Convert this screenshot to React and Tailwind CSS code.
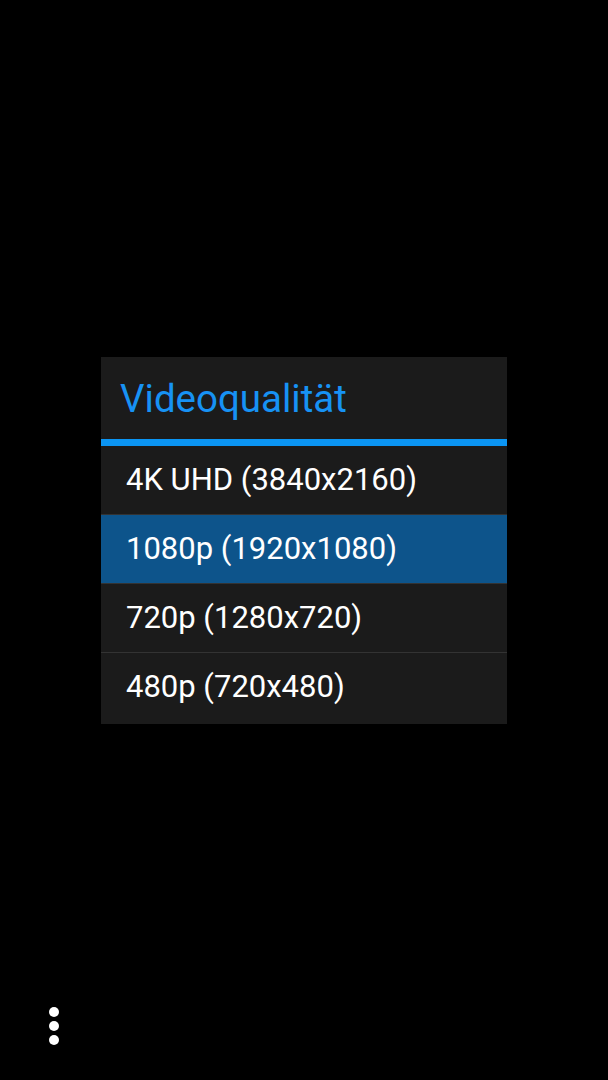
import React, { useState } from "react";

const options = [
  "4K UHD (3840x2160)",
  "1080p (1920x1080)",
  "720p (1280x720)",
  "480p (720x480)",
];

const App = () => {
  const [selected, setSelected] = useState(1);

  return (
    <div
      className="relative h-[1080px] w-full bg-black flex items-center justify-center"
      style={{ fontFamily: "Roboto, 'Noto Sans', sans-serif" }}
    >
      {/* Dialog */}
      <div className="w-[406px] bg-[#1b1b1b] flex flex-col">
        <div className="h-[82px] flex items-center pl-[19px] pt-[4px]">
          <h2 className="text-[38.5px] leading-none text-[#1792f4]">Videoqualität</h2>
        </div>
        <div className="h-[7px] bg-[#0b95f3]" />
        {options.map((opt, i) => (
          <button
            key={opt}
            onClick={() => setSelected(i)}
            className={
              "flex items-center pl-[25px] text-left text-[31px] leading-none text-white " +
              (i > 0 ? "h-[69px] border-t border-[#333333] " : "h-[68px] ") +
              (i === selected ? "bg-[#0d548b]" : "bg-[#1b1b1b]")
            }
          >
            {opt}
          </button>
        ))}
        <div className="h-[3px]" />
      </div>

      {/* Overflow menu */}
      <div className="absolute left-[49px] bottom-[35px] flex flex-col gap-[4px]">
        <span className="w-[10px] h-[10px] rounded-full bg-white" />
        <span className="w-[10px] h-[10px] rounded-full bg-white" />
        <span className="w-[10px] h-[10px] rounded-full bg-white" />
      </div>
    </div>
  );
};

export default App;
